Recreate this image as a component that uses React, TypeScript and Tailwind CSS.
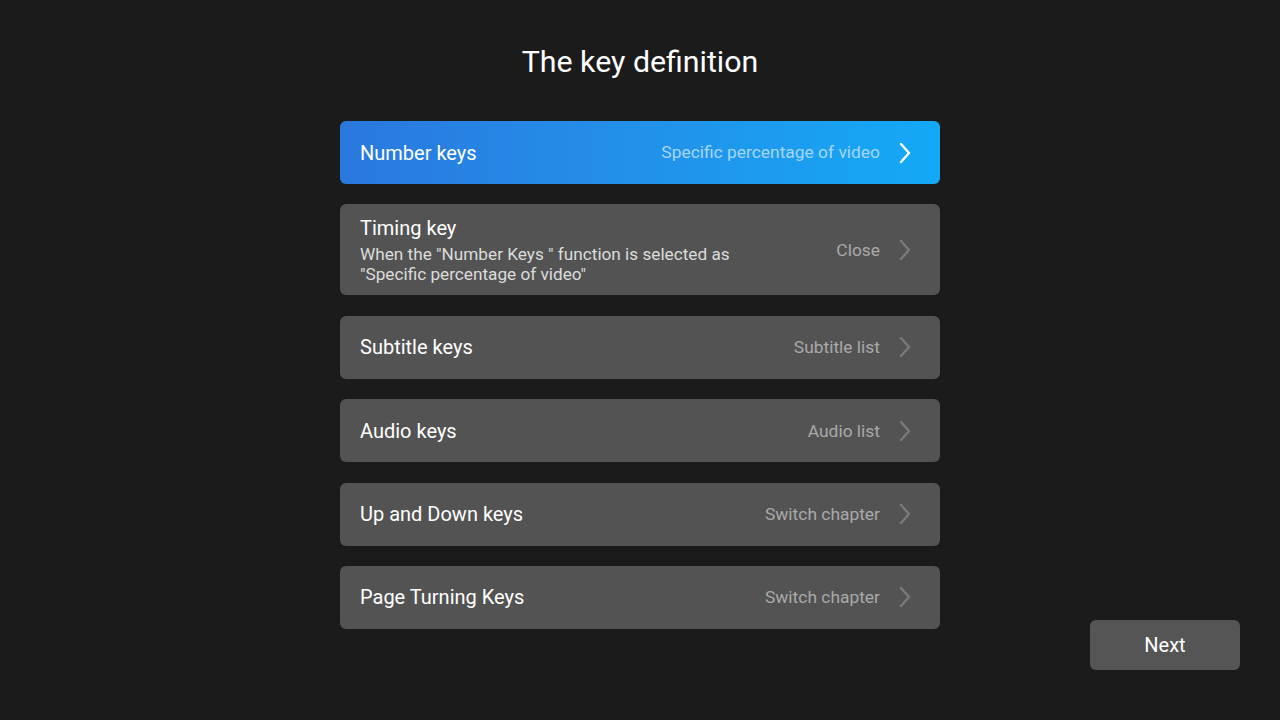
import React from "react";

const Chevron = ({ color }: { color: string }) => (
  <svg width="14" height="22" viewBox="0 0 14 22" fill="none" className="shrink-0">
    <path d="M3 2 L11 11 L3 20" stroke={color} strokeWidth="2.4" strokeLinecap="round" strokeLinejoin="round" />
  </svg>
);

type Row = { title: string; sub?: string[]; value: string };

const rows: Row[] = [
  { title: "Timing key", sub: ['When the "Number Keys " function is selected as', '"Specific percentage of video"'], value: "Close" },
  { title: "Subtitle keys", value: "Subtitle list" },
  { title: "Audio keys", value: "Audio list" },
  { title: "Up and Down keys", value: "Switch chapter" },
  { title: "Page Turning Keys", value: "Switch chapter" },
];

export default function App() {
  return (
    <div
      className="w-[1280px] h-[720px] bg-[#1b1b1b] grid grid-cols-[340px_600px_340px] overflow-hidden"
      style={{ fontFamily: "Roboto, 'Noto Sans', sans-serif" }}
    >
      <div />
      <div className="flex flex-col items-stretch pt-[44px]">
        <h1 className="text-center text-white text-[30.3px] leading-[36px] font-normal">The key definition</h1>
        <div className="mt-[41px] flex flex-col gap-[20.4px]">
          <div className="h-[63px] rounded-[6px] bg-gradient-to-r from-[#2a78de] to-[#12a9f6] flex items-center pl-[20px] pr-[28px]">
            <span className="text-white text-[20px] flex-1">Number keys</span>
            <span className="text-[#a6d6f7] text-[17.4px] mr-[18px]">Specific percentage of video</span>
            <Chevron color="#ffffff" />
          </div>
          {rows.map((r) => (
            <div
              key={r.title}
              className={`rounded-[6px] bg-[#535353] flex items-center pl-[20px] pr-[28px] ${r.sub ? "pt-[12px] pb-[11px]" : "h-[63px]"}`}
            >
              <div className="flex-1 flex flex-col">
                <span className="text-white text-[20px] leading-[24px]">{r.title}</span>
                {r.sub && (
                  <div className="mt-[4px] flex flex-col text-[#dcdcdc] text-[17.2px] leading-[20px]">
                    {r.sub.map((s) => (
                      <span key={s}>{s}</span>
                    ))}
                  </div>
                )}
              </div>
              <span className="text-[#a9a9a9] text-[17.4px] mr-[18px]">{r.value}</span>
              <Chevron color="#7a7a7a" />
            </div>
          ))}
        </div>
      </div>
      <div className="flex flex-col justify-end items-end pr-[40px] pb-[50px]">
        <button className="w-[150px] h-[50px] rounded-[6px] bg-[#555555] text-white text-[20px]">Next</button>
      </div>
    </div>
  );
}
